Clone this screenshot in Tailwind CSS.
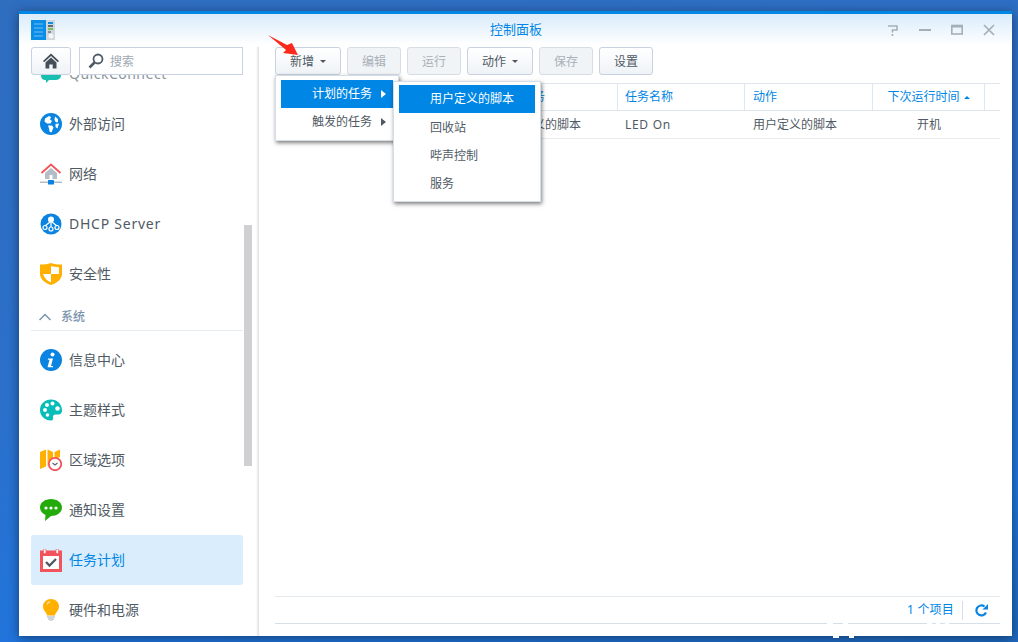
<!DOCTYPE html>
<html lang="zh-CN">
  <head>
    <meta charset="UTF-8" />
    <title>控制面板</title>
    <script src="https://cdn.jsdelivr.net/npm/@tailwindcss/browser@4"></script>
  </head>
  <body class="relative h-[642px] w-[1018px] overflow-hidden bg-[linear-gradient(170deg,#2f6dbf_0%,#2b70cb_50%,#2074dc_80%,#1f68bd_100%)] font-['Noto_Sans','Noto_Sans_CJK_SC',sans-serif] text-xs text-[#505a64]">
    <!-- window -->
    <div class="absolute left-[19px] top-[11px] flex h-[625px] w-[993px] flex-col overflow-hidden border-t-[3px] border-[#0086e5] bg-white shadow-[0_2px_10px_rgba(0,0,0,0.45)]">
      <!-- title bar -->
      <div class="flex h-[31px] shrink-0 items-center bg-gradient-to-b from-[#d9ebfa] to-white">
        <div class="flex flex-1 pl-3">
          <svg width="24" height="20" viewBox="0 0 24 20">
            <rect x="0" y="0" width="16" height="20" fill="#0a8de6" />
            <rect x="15" y="0" width="9" height="20" fill="#cfd6dc" />
            <path d="M3 4h9M3 8h9M3 12h9M3 16h9" stroke="#6cc0f5" stroke-width="1" />
            <path d="M17 3h5" stroke="#0a8de6" stroke-width="2" />
            <path d="M17 6h5" stroke="#37474f" stroke-width="1.5" />
            <path d="M17 9h5" stroke="#5cb531" stroke-width="1.5" />
            <path d="M17 12h3" stroke="#37474f" stroke-width="1" />
            <circle cx="20" cy="16" r="2.5" fill="#f3f5f7" />
          </svg>
        </div>
        <div class="mr-1 text-[13px] leading-none text-[#0086e5]">控制面板</div>
        <div class="flex flex-1 justify-end pr-[7px] text-[#a5afba]">
          <div class="flex h-6 w-8 items-center justify-center">
            <svg width="12" height="12" viewBox="0 0 12 12" fill="none" stroke="currentColor" stroke-width="1.6"><path d="M1 2h9v4H5.5v2.5" /><path d="M5.5 10v2" /></svg>
          </div>
          <div class="flex h-6 w-8 items-center justify-center">
            <svg width="12" height="12" viewBox="0 0 12 12"><rect x="0" y="5" width="12" height="2" fill="currentColor" /></svg>
          </div>
          <div class="flex h-6 w-8 items-center justify-center">
            <svg width="12" height="12" viewBox="0 0 12 12" fill="none" stroke="currentColor"><rect x="0.8" y="1.5" width="10.4" height="8.5" stroke-width="1.6" /><path d="M0 2.5h12" stroke-width="2" /></svg>
          </div>
          <div class="flex h-6 w-8 items-center justify-center">
            <svg width="12" height="12" viewBox="0 0 12 12" fill="none" stroke="currentColor" stroke-width="1.7"><path d="M1 1l10 10M11 1L1 11" /></svg>
          </div>
        </div>
      </div>

      <div class="mt-[2px] flex min-h-0 flex-1">
        <!-- sidebar -->
        <div class="flex w-[237px] shrink-0 flex-col">
          <div class="z-10 flex h-7 shrink-0 gap-2 pl-3 pr-[13px]">
            <div class="flex w-10 items-center justify-center rounded-[3px] border border-[#c6d2df] bg-gradient-to-b from-white to-[#eff3f7]">
              <svg width="16" height="16" viewBox="0 0 16 16" fill="#454f5a"><path d="M8 0.5L0 8l1.2 1.2L8 3l6.8 6.2L16 8z" /><path d="M2.5 9.5L8 4.5l5.5 5V15.5H9.7v-4H6.3v4H2.5z" /></svg>
            </div>
            <div class="flex flex-1 items-center gap-[6px] border border-[#c6d2df] bg-white pl-2 text-[#a0a8b2]">
              <svg width="16" height="16" viewBox="0 0 16 16" fill="none" stroke="#4f5964"><circle cx="10" cy="6" r="4.5" stroke-width="1.8" /><path d="M6.5 9.5L1.5 14.5" stroke-width="2.6" /></svg>
              <span class="pt-px">搜索</span>
            </div>
          </div>

          <div class="relative min-h-0 flex-1 overflow-hidden pl-3 pr-[13px] text-sm">
            <div class="mt-[-26px] flex h-[50px] items-center gap-[7px] pl-[9px] text-[#8d959e]">
              <svg width="22" height="22" viewBox="0 0 22 22"><path d="M1 4h20v8c0 4-3 5-6 5H9l-3 3v-3c-3 0-5-1-5-5z" fill="#16bfb0" /></svg>
              <span class="tracking-[0.5px]">QuickConnect</span>
            </div>
            <div class="flex h-[50px] items-center gap-[7px] pl-[9px]">
              <svg width="22" height="22" viewBox="0 0 22 22"><circle cx="11" cy="11" r="11" fill="#0a84e0" /><path d="M5 5.5l4-2.5 2 1-1 2.5 2 1.5-1.5 2.5H7L4.5 8.500zM8 12.500h4l1.500 2-2 5-2-1-.5-3zM15 3.500l3 2.500v3l-2 .5-1.500-2.500zM15.500 11l3.500-.5-1.500 5-2-1.500z" fill="#fff" /></svg>
              <span>外部访问</span>
            </div>
            <div class="flex h-[50px] items-center gap-[7px] pl-[9px]">
              <svg width="22" height="22" viewBox="0 0 22 22"><path d="M5 10l6-5 6 5v6H5z" fill="#b4bdc7" /><rect x="9.500" y="12" width="3" height="4" fill="#fff" /><path d="M1.500 10L11 1.500 20.500 10" fill="none" stroke="#f2545b" stroke-width="1.800" /><rect x="0" y="18.500" width="22" height="1.500" fill="#b4bdc7" /><rect x="8" y="17" width="6" height="4.500" rx="0.500" fill="#0a84e0" /></svg>
              <span>网络</span>
            </div>
            <div class="flex h-[50px] items-center gap-[7px] pl-[9px]">
              <svg width="22" height="22" viewBox="0 0 22 22"><circle cx="11" cy="11" r="10.500" fill="#0a84e0" /><circle cx="11" cy="6.500" r="3" fill="#fff" /><path d="M11 8v6M10 9l-5 4M12 9l5 4" stroke="#fff" stroke-width="1.200" fill="none" /><circle cx="5" cy="14.500" r="2" fill="none" stroke="#fff" stroke-width="1.200" /><circle cx="11" cy="16" r="2" fill="none" stroke="#fff" stroke-width="1.200" /><circle cx="17" cy="14.500" r="2" fill="none" stroke="#fff" stroke-width="1.200" /></svg>
              <span class="tracking-[0.75px]">DHCP Server</span>
            </div>
            <div class="flex h-[50px] items-center gap-[7px] pl-[9px]">
              <svg width="22" height="22" viewBox="0 0 22 22"><path d="M0 1.500C4 1.500 8 1 11 0c3 1 7 1.500 11 1.500V11c0 5-5 9-11 11C5 20 0 16 0 11z" fill="#ffb000" /><path d="M11 3c2.500.7 5 1 8 1.200V11h-8zM11 11v8.500C7.500 18 4 15 3.200 11z" fill="#fff" /></svg>
              <span>安全性</span>
            </div>
            <div class="mb-[4px] flex h-[32px] items-center gap-[10px] border-b border-[#e6ebf1] pl-2 pt-[5px] text-xs font-medium text-[#7a93ad]">
              <svg width="12" height="8" viewBox="0 0 12 8" fill="none" stroke="#7a93ad" stroke-width="1.500"><path d="M0.500 7L6 1.500 11.500 7" /></svg>
              <span>系统</span>
            </div>
            <div class="flex h-[50px] items-center gap-[7px] pl-[9px]">
              <svg width="22" height="22" viewBox="0 0 22 22"><circle cx="11" cy="11" r="11" fill="#0a84e0" /><circle cx="12.500" cy="5.500" r="2" fill="#fff" /><path d="M8 9.500h5l-2 7.500h2v1.200H7.500l2-7.500H7.800z" fill="#fff" /></svg>
              <span>信息中心</span>
            </div>
            <div class="flex h-[50px] items-center gap-[7px] pl-[9px]">
              <svg width="22" height="22" viewBox="0 0 22 22"><path d="M11 0.500C5 0.500 0 5 0 11s5 10.500 11 10.500c2 0 2.500-1.500 2-3-.5-1.500.5-3 2.500-3h3c2 0 3.500-1.500 3.500-4C22 5 17 0.500 11 0.500z" fill="#06bdb8" /><circle cx="5" cy="11" r="2" fill="#fff" /><circle cx="7" cy="6" r="2" fill="#fff" /><circle cx="12.500" cy="4.500" r="2" fill="#fff" /><circle cx="17.500" cy="9.500" r="2.300" fill="#fff" /><circle cx="7.500" cy="16" r="1.800" fill="#fff" /></svg>
              <span>主题样式</span>
            </div>
            <div class="flex h-[50px] items-center gap-[7px] pl-[9px]">
              <svg width="22" height="22" viewBox="0 0 22 22"><path d="M0 3l6-2.500v17L0 20zM7.500 0.500L13 3v7l-5.500 7zM14.500 3L20 0.500V8l-5.500 2z" fill="#ffb000" /><circle cx="15" cy="15" r="6.200" fill="#fff" stroke="#f2545b" stroke-width="1.800" /><path d="M12.500 14l2.500 2 2.500-2" fill="none" stroke="#5d6873" stroke-width="1.200" /></svg>
              <span>区域选项</span>
            </div>
            <div class="flex h-[50px] items-center gap-[7px] pl-[9px]">
              <svg width="22" height="22" viewBox="0 0 22 22"><path d="M11 0C5 0 0 3.500 0 8.500c0 3.500 2.500 6 5.500 7.500L5 22l6-5c6 0 11-3.500 11-8.500S17 0 11 0z" fill="#22ab0a" /><circle cx="6" cy="9" r="1.600" fill="#fff" /><circle cx="11" cy="9" r="1.600" fill="#fff" /><circle cx="16" cy="9" r="1.600" fill="#fff" /></svg>
              <span>通知设置</span>
            </div>
            <div class="flex h-[50px] items-center gap-[7px] rounded-[3px] bg-[#d9edfd] pl-[9px] text-[#0086e5]">
              <svg width="22" height="23" viewBox="0 0 22 23"><rect x="0" y="1.500" width="22" height="21.500" fill="#f2545b" /><rect x="3" y="7" width="16" height="13" fill="#fff" /><rect x="3.500" y="0" width="2.500" height="4.500" rx="1" fill="#fff" stroke="#f2545b" stroke-width="0.700" /><rect x="16" y="0" width="2.500" height="4.500" rx="1" fill="#fff" stroke="#f2545b" stroke-width="0.700" /><path d="M6 13l3.500 3.500L16 10" fill="none" stroke="#4f5964" stroke-width="2.300" /></svg>
              <span>任务计划</span>
            </div>
            <div class="flex h-[50px] items-center gap-[7px] pl-[9px]">
              <svg width="22" height="22" viewBox="0 0 22 22"><path d="M11 0c4.500 0 8 3.300 8 7.500 0 3-1.800 4.500-3 6.500-.5.800-1 1.500-1 2.500H7c0-1-.5-1.700-1-2.500-1.200-2-3-3.500-3-6.500C3 3.300 6.500 0 11 0z" fill="#ffb000" /><path d="M7 5.500C7.500 4 9 3 10 3" fill="none" stroke="#ffe09a" stroke-width="1.300" /><path d="M7 18h8M8 20h6M9.500 22h3" stroke="#a2abb5" stroke-width="1.100" /></svg>
              <span>硬件和电源</span>
            </div>
            <div class="absolute left-[225px] top-[150px] h-[241px] w-2 bg-[#d0d0d2]"></div>
          </div>
        </div>
        <div class="w-[3px] shrink-0 bg-gradient-to-r from-white to-[#dcdfe2]"></div>

        <!-- main panel -->
        <div class="relative flex min-w-0 flex-1 flex-col pl-4 pr-3">
          <div class="flex h-7 shrink-0 gap-[6px] leading-none">
            <div class="flex w-[66px] items-center justify-center gap-[6px] rounded-[3px] border border-[#c6d2df] bg-gradient-to-b from-white to-[#eff3f7] pt-px">
              新增<svg width="6" height="3" viewBox="0 0 6 3" fill="#505a64"><path d="M0 0h6L3 3z" /></svg>
            </div>
            <div class="flex w-[54px] items-center justify-center rounded-[3px] border border-[#d5dde6] bg-[#f1f4f7] pt-px text-[#a8b0b8]">编辑</div>
            <div class="flex w-[54px] items-center justify-center rounded-[3px] border border-[#d5dde6] bg-[#f1f4f7] pt-px text-[#a8b0b8]">运行</div>
            <div class="flex w-[66px] items-center justify-center gap-[6px] rounded-[3px] border border-[#c6d2df] bg-gradient-to-b from-white to-[#eff3f7] pt-px">
              动作<svg width="6" height="3" viewBox="0 0 6 3" fill="#505a64"><path d="M0 0h6L3 3z" /></svg>
            </div>
            <div class="flex w-[54px] items-center justify-center rounded-[3px] border border-[#d5dde6] bg-[#f1f4f7] pt-px text-[#a8b0b8]">保存</div>
            <div class="flex w-[54px] items-center justify-center rounded-[3px] border border-[#c6d2df] bg-gradient-to-b from-white to-[#eff3f7] pt-px">设置</div>
          </div>

          <!-- task table -->
          <div class="mt-2 grid shrink-0 grid-cols-[215px_128px_127px_128px_112px_15px] border-y border-[#dfe5ea] text-[#0086e5]">
            <div class="flex h-[26px] items-center border-r border-[#dbe7f3] pl-2">已启动</div>
            <div class="flex h-[26px] items-center border-r border-[#dbe7f3] pl-[7px]">计划任务</div>
            <div class="flex h-[26px] items-center border-r border-[#dbe7f3] pl-[7px]">任务名称</div>
            <div class="flex h-[26px] items-center border-r border-[#dbe7f3] pl-2">动作</div>
            <div class="flex h-[26px] items-center justify-center gap-[4px] border-r border-[#dbe7f3]">
              下次运行时间<svg width="6" height="3" viewBox="0 0 6 3" fill="#0086e5"><path d="M0 3h6L3 0z" /></svg>
            </div>
            <div></div>
          </div>
          <div class="grid h-[28px] shrink-0 grid-cols-[215px_128px_127px_128px_112px_15px] items-center border-b border-[#e8ecef]">
            <div></div>
            <div class="pl-[7px]">用户定义的脚本</div>
            <div class="pl-[7px] tracking-[0.7px]">LED On</div>
            <div class="pl-2">用户定义的脚本</div>
            <div class="text-center">开机</div>
          </div>
          <div class="flex-1"></div>
          <div class="mb-3 flex h-[28px] shrink-0 items-center justify-end border-y border-y-[#e4e9ee] border-b-[#d5dfe9] text-[#0086e5]">
            <span class="tracking-[0.2px]">1 个项目</span>
            <div class="ml-2 h-[19px] w-px bg-[#d5dfe9]"></div>
            <div class="flex w-[37px] justify-center">
              <svg width="13" height="13" viewBox="0 0 13 13" fill="none"><path d="M11 8.500A5 5 0 1 1 9.500 2.500" stroke="#0a84e0" stroke-width="2.200" /><path d="M7.500 5.500h5.500V0z" fill="#0a84e0" /></svg>
            </div>
          </div>

          <!-- dropdown menu -->
          <div class="absolute left-4 top-7 h-[66px] w-[124px] border border-[#d5dde6] bg-white p-[5px] pt-[4px] shadow-[1px_2px_4px_rgba(0,0,0,0.5)]">
            <div class="flex h-7 items-center justify-between bg-[#0086e5] pl-[31px] pr-[7px] text-white">
              计划的任务<svg width="5" height="8" viewBox="0 0 5 8" fill="#fff"><path d="M0 0l5 4-5 4z" /></svg>
            </div>
            <div class="flex h-7 items-center justify-between pl-[31px] pr-[7px]">
              触发的任务<svg width="5" height="8" viewBox="0 0 5 8" fill="#505a64"><path d="M0 0l5 4-5 4z" /></svg>
            </div>
          </div>
          <div class="absolute left-[134px] top-[34px] h-[121px] w-[148px] border border-[#d5dde6] bg-white p-[5px] pt-[3px] shadow-[1px_2px_4px_rgba(0,0,0,0.5)]">
            <div class="flex h-7 items-center bg-[#0086e5] pl-[31px] text-white">用户定义的脚本</div>
            <div class="flex h-7 items-center pl-[31px] pt-px">回收站</div>
            <div class="flex h-7 items-center pl-[31px] pt-px">哔声控制</div>
            <div class="flex h-7 items-center pl-[31px] pt-px">服务</div>
          </div>
        </div>
      </div>
    </div>

    <!-- red pointer drawn over the screenshot -->
    <svg class="absolute left-[266px] top-[33px]" width="34" height="24" viewBox="266 33 34 24">
      <path d="M268 35l19 10 5-2 6 12-15-2 3-3z" fill="#fb2a1c" />
    </svg>
    <!-- watermark specks -->
    <div class="absolute left-[827px] top-[622px] h-[3px] w-[6px] bg-white"></div>
    <div class="absolute left-[843px] top-[622px] h-[3px] w-[5px] bg-white"></div>
    <div class="absolute left-[927px] top-[622px] h-[3px] w-[5px] bg-white"></div>
    <div class="absolute left-[936px] top-[622px] h-[3px] w-[4px] bg-white"></div>
    <div class="absolute left-[945px] top-[622px] h-[3px] w-[4px] bg-white"></div>
    <div class="absolute left-[833px] top-[636px] h-[2px] w-[6px] bg-white"></div>
    <div class="absolute left-[849px] top-[636px] h-[2px] w-[5px] bg-white"></div>
  </body>
</html>
